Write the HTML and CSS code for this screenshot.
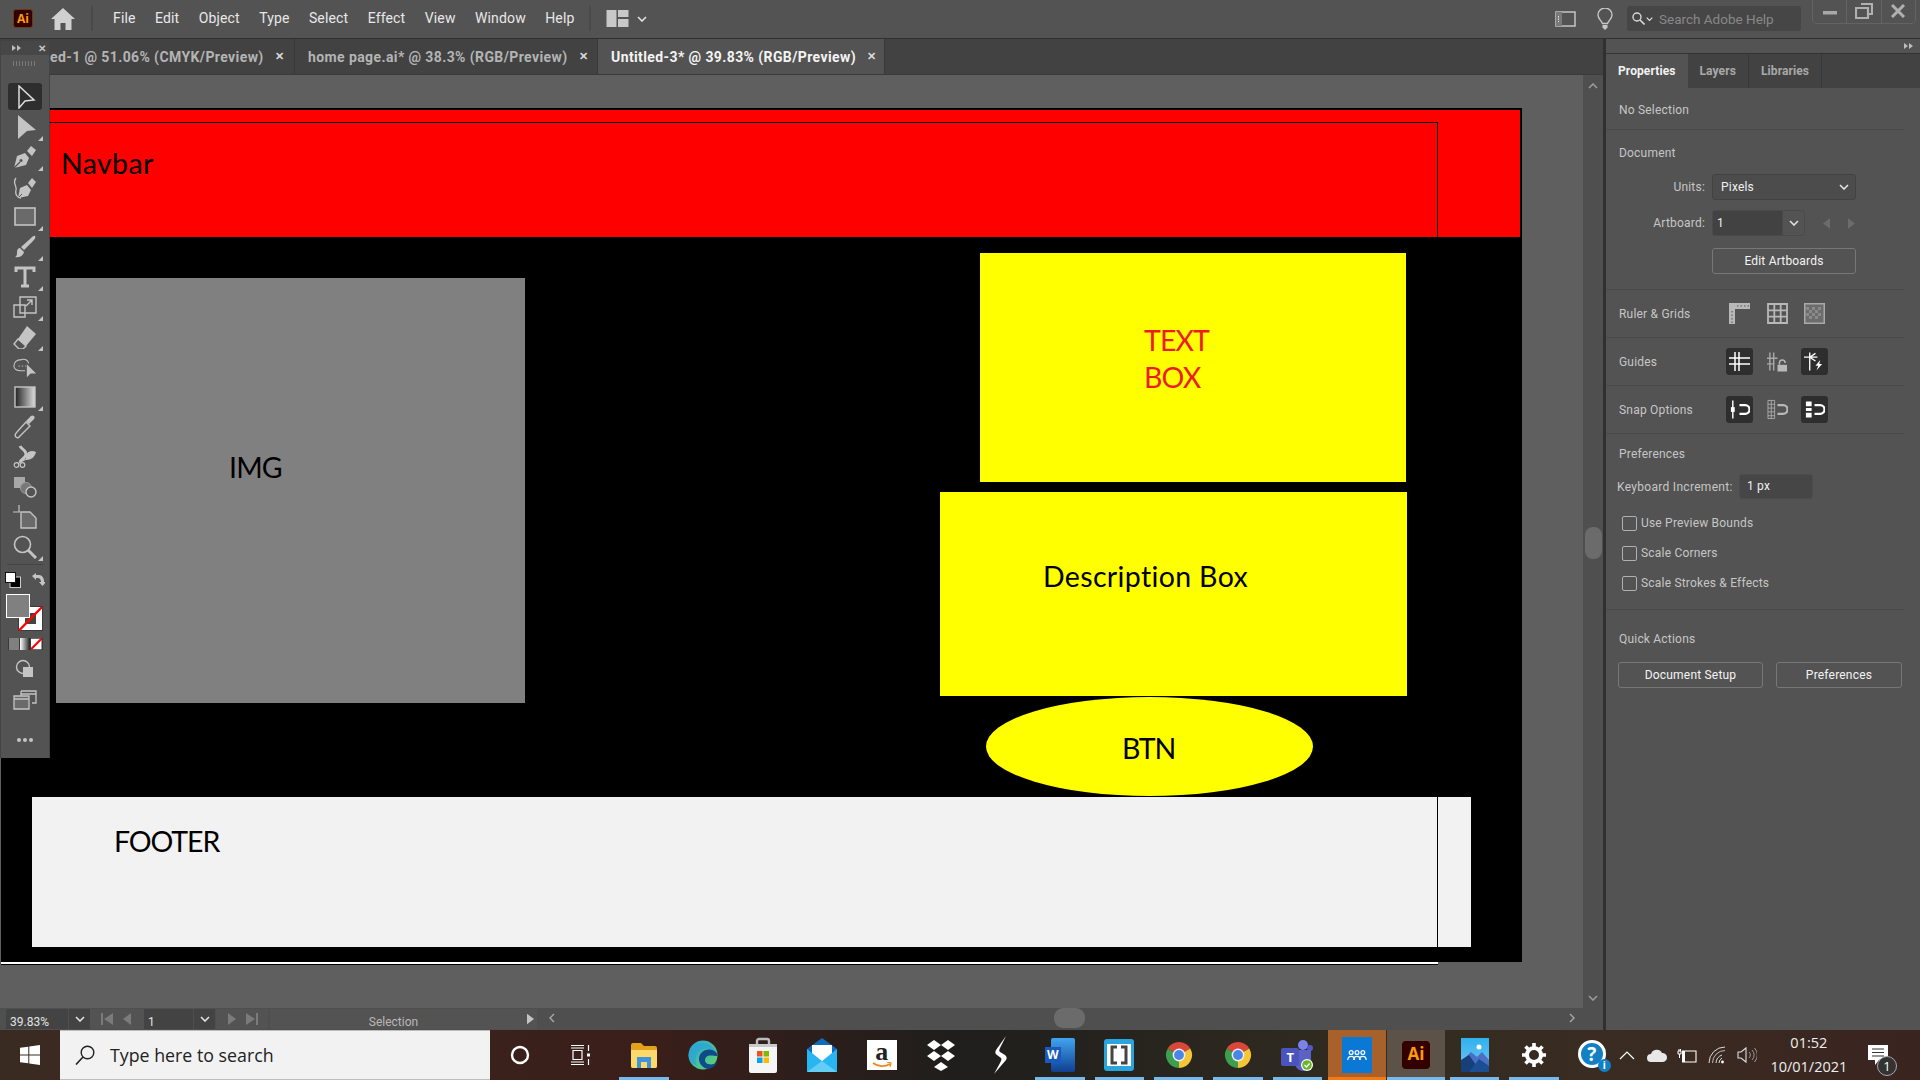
FILE: index.html
```html
<!DOCTYPE html>
<html lang="en">
<head>
  <meta charset="UTF-8">
  <title>Adobe Illustrator</title>
  <link rel="stylesheet" href="styles.css">
</head>
<body>

<svg class="defs" width="0" height="0">
  <defs>
    <linearGradient id="gradTool" x1="0" x2="1" y1="0" y2="0"><stop offset="0" stop-color="#222"/><stop offset="1" stop-color="#ddd"/></linearGradient>
    <linearGradient id="edgeGrad" x1="0" x2="1" y1="0" y2="1"><stop offset="0" stop-color="#2aa4d8"/><stop offset="1" stop-color="#62d66a"/></linearGradient>
    <linearGradient id="photoGrad" x1="0" x2="0" y1="0" y2="1"><stop offset="0" stop-color="#2db2ee"/><stop offset="1" stop-color="#7cc6f2"/></linearGradient>
    <symbol id="chev" viewBox="0 0 10 6"><path d="M1 1l4 4 4-4" fill="none" stroke="currentColor" stroke-width="1.6"/></symbol>
    <symbol id="dbl" viewBox="0 0 9 6"><path d="M0 0l4 3-4 3zM5 0l4 3-4 3z" fill="currentColor"/></symbol>
    <symbol id="chrome" viewBox="0 0 28 28">
      <path d="M14 14L2.74 7.5A13 13 0 0 1 25.26 7.5Z" fill="#d9473b"/>
      <path d="M14 14L25.26 7.5A13 13 0 0 1 14 27Z" fill="#f4c534"/>
      <path d="M14 14L14 27A13 13 0 0 1 2.74 7.5Z" fill="#3d9e4d"/>
      <circle cx="14" cy="14" r="6.4" fill="#eee"/><circle cx="14" cy="14" r="4.9" fill="#4a86e8"/>
    </symbol>
    <symbol id="nib" viewBox="0 0 24 24">
      <path d="M1 23l3-12 8-3 4 5-3 7zM14 6l4-5 5 4-4 6z" fill="currentColor"/>
      <path d="M1 23l6-6" stroke="#535353" stroke-width="1.2"/><circle cx="8" cy="15.500" r="1.500" fill="#535353"/>
    </symbol>
  </defs>
</svg>

<div class="app">

  <header class="menubar">
    <div class="ai-logo">Ai</div>
    <svg class="home" viewBox="0 0 24 22"><path d="M12 0L0 11h3.500v11h6v-7h5v7h6V11H24z" fill="#d0d0d0"/></svg>
    <span class="vsep"></span>
    <nav class="menu">
      <span>File</span><span>Edit</span><span>Object</span><span>Type</span><span>Select</span><span>Effect</span><span>View</span><span>Window</span><span>Help</span>
    </nav>
    <span class="vsep sep2"></span>
    <svg class="workspace" viewBox="0 0 22 17"><path d="M0 0h10v17H0zM11.500 0H22v7H11.500zM11.500 9H22v8H11.500z" fill="#c8c8c8"/></svg>
    <svg class="chev-sm ws-chev"><use href="#chev"/></svg>
    <div class="spacer"></div>
    <svg class="panel-ico" viewBox="0 0 21 16"><rect x="1" y="1" width="19" height="14" fill="none" stroke="#bdbdbd" stroke-width="1.600"/><path d="M1 1h6v14H1z" fill="#7a7a7a"/><path d="M3.500 5v6" stroke="#ddd" stroke-dasharray="1.500 1"/></svg>
    <svg class="bulb" viewBox="0 0 16 22"><path d="M5.500 15.500C4.500 12.500 1 11 1 7a7 7 0 0 1 14 0c0 4-3.500 5.500-4.500 8.500z" fill="none" stroke="#c6c6c6" stroke-width="1.400"/><path d="M5.500 17h5v2.500L8 22l-2.500-2.500z" fill="#c6c6c6"/></svg>
    <div class="help-search">
      <svg class="mag" viewBox="0 0 13 13"><circle cx="5" cy="5" r="4" fill="none" stroke="#d8d8d8" stroke-width="1.400"/><path d="M8 8l4.500 4.500" stroke="#d8d8d8" stroke-width="1.600"/></svg>
      <svg class="chev-sm"><use href="#chev"/></svg>
      <span>Search Adobe Help</span>
    </div>
    <div class="winctl">
      <span><svg viewBox="0 0 14 14"><rect x="0" y="7" width="14" height="3.500" fill="#a8a8a8"/></svg></span>
      <span><svg class="restore" viewBox="0 0 18 16"><path d="M6 1h11v10h-3M1 5h12v10H1z" fill="none" stroke="#b0b0b0" stroke-width="2.200"/></svg></span>
      <span><svg viewBox="0 0 14 14"><path d="M1 1l12 12M13 1L1 13" stroke="#b0b0b0" stroke-width="3"/></svg></span>
    </div>
  </header>

  <div class="work">
    <section class="doc">
      <div class="tabs">
        <div class="tab tab-first">ed-1 @ 51.06% (CMYK/Preview)<i>&#10005;</i></div>
        <div class="tab tab-second">home page.ai* @ 38.3% (RGB/Preview)<i>&#10005;</i></div>
        <div class="tab tab-on">Untitled-3* @ 39.83% (RGB/Preview)<i>&#10005;</i></div>
      </div>

      <div class="canvas-row">
        <div class="canvas">
          <div class="artboard">
            <div class="shape navbar">Navbar</div>
            <div class="outline-top"></div>
            <div class="shape img-box">IMG</div>
            <div class="shape text-box">TEXT<br>BOX</div>
            <div class="shape desc-box">Description Box</div>
            <div class="shape btn-oval">BTN</div>
            <div class="shape footer-box">FOOTER</div>
            <div class="outline-right"></div>
          </div>
          <div class="outline-bottom"></div>
        </div>
        <div class="vscroll">
          <svg class="chev-up"><use href="#chev"/></svg>
          <div class="vthumb"></div>
          <svg class="chev-down"><use href="#chev"/></svg>
        </div>
      </div>

      <div class="status">
        <div class="st-field st-zoom">39.83%</div>
        <div class="st-drop"><svg class="chev-sm"><use href="#chev"/></svg></div>
        <div class="st-nav st-nav-l">
          <svg viewBox="0 0 12 12"><path d="M0 0h2v12H0zM12 0v12L3 6z" fill="#7b7b7b"/></svg>
          <svg viewBox="0 0 12 12"><path d="M10 0v12L2 6z" fill="#7b7b7b"/></svg>
        </div>
        <div class="st-field st-page">1</div>
        <div class="st-drop"><svg class="chev-sm"><use href="#chev"/></svg></div>
        <div class="st-nav st-nav-r">
          <svg viewBox="0 0 12 12"><path d="M2 0v12l8-6z" fill="#7b7b7b"/></svg>
          <svg viewBox="0 0 12 12"><path d="M12 0h-2v12h2zM0 0v12l9-6z" fill="#7b7b7b"/></svg>
        </div>
        <div class="st-label">Selection</div>
        <div class="st-arrow"><svg viewBox="0 0 8 12"><path d="M0 0v12l8-6z" fill="#c4c4c4"/></svg></div>
        <div class="hscroll">
          <svg class="h-left" viewBox="0 0 6 10"><path d="M5 1L1 5l4 4" fill="none" stroke="#a8a8a8" stroke-width="1.400"/></svg>
          <div class="hthumb"></div>
          <svg class="h-right" viewBox="0 0 6 10"><path d="M1 1l4 4-4 4" fill="none" stroke="#a8a8a8" stroke-width="1.400"/></svg>
        </div>
      </div>
    </section>

    <aside class="panel">
      <div class="panel-strip"><svg class="dbl"><use href="#dbl"/></svg></div>
      <div class="panel-tabs">
        <div class="ptab ptab-on">Properties</div>
        <div class="ptab">Layers</div>
        <div class="ptab">Libraries</div>
      </div>

      <div class="sec sec-none">No Selection</div>

      <div class="sec sec-doc">
        <div class="sec-title">Document</div>
        <div class="form-row first">
          <label>Units:</label>
          <div class="select">Pixels<svg class="chev-sm"><use href="#chev"/></svg></div>
        </div>
        <div class="form-row row-ab">
          <label>Artboard:</label>
          <div class="combo"><span>1</span><b><svg class="chev-sm"><use href="#chev"/></svg></b></div>
          <svg class="ab-arrow" viewBox="0 0 8 12"><path d="M8 0v12L0 6z" fill="#6c6c6c"/></svg>
          <svg class="ab-arrow" viewBox="0 0 8 12"><path d="M0 0v12l8-6z" fill="#6c6c6c"/></svg>
        </div>
        <div class="form-row row-edit">
          <label></label>
          <div class="btn btn-edit">Edit Artboards</div>
        </div>
      </div>

      <div class="sec sec-icons">
        <div class="icons-label">Ruler &amp; Grids</div>
        <div class="icon-btn"><svg viewBox="0 0 21 21"><path d="M0 0h21v6H6v15H0z" fill="#b8b8b8"/><path d="M8 3h12M3 8v12" stroke="#535353" stroke-dasharray="1.500 2"/></svg></div>
        <div class="icon-btn"><svg viewBox="0 0 21 21"><path d="M1 1h19v19H1zM7.300 1v19M13.700 1v19M1 7.300h19M1 13.700h19" fill="none" stroke="#b8b8b8" stroke-width="1.800"/></svg></div>
        <div class="icon-btn"><svg viewBox="0 0 21 21"><rect width="21" height="21" fill="#a8a8a8"/><rect x="1.500" y="1.500" width="18" height="18" fill="#6c6c6c"/><path d="M2 4h3v3H2zM8 4h3v3H8zM14 4h3v3h-3zM5 7h3v3H5zM11 7h3v3h-3zM2 10h3v3H2zM8 10h3v3H8zM14 10h3v3h-3zM5 13h3v3H5zM11 13h3v3h-3z" fill="#8a8a8a"/></svg></div>
      </div>

      <div class="sec sec-icons">
        <div class="icons-label">Guides</div>
        <div class="icon-btn on"><svg viewBox="0 0 21 21"><path d="M6 1v19M10 1v19M0 7h21M0 13h21" stroke="#fff" stroke-width="1.500"/></svg></div>
        <div class="icon-btn"><svg viewBox="0 0 22 21"><path d="M3 1v19M7 1v19M0 7h11M0 13h8" stroke="#a8a8a8" stroke-width="1.500"/><path d="M11 14h10v7H11z" fill="#b8b8b8"/><path d="M13 14v-2a3 3 0 0 1 6 0" fill="none" stroke="#b8b8b8" stroke-width="1.500"/></svg></div>
        <div class="icon-btn on"><svg viewBox="0 0 22 21"><path d="M6 1v19M0 6h14M6 6l6-4M6 6l6 4" stroke="#fff" stroke-width="1.400" fill="none"/><path d="M17 9l-5 6h3l-2 5 6-7h-3z" fill="#fff"/></svg></div>
      </div>

      <div class="sec sec-icons">
        <div class="icons-label">Snap Options</div>
        <div class="icon-btn on"><svg viewBox="0 0 22 21"><path d="M4 1v19" stroke="#fff" stroke-width="1.500"/><rect x="2" y="8" width="4" height="5" fill="#fff"/><path d="M11 6h6a4 4 0 0 1 0 9h-6" fill="none" stroke="#fff" stroke-width="2.400"/></svg></div>
        <div class="icon-btn"><svg viewBox="0 0 22 21"><path d="M1 1h7v19H1zM1 5h7M1 9h7M1 13h7M1 17h7M4.500 1v19" fill="none" stroke="#a8a8a8"/><path d="M11 6h6a4 4 0 0 1 0 9h-6" fill="none" stroke="#b8b8b8" stroke-width="2.400"/></svg></div>
        <div class="icon-btn on"><svg viewBox="0 0 22 21"><path d="M2 2h6v5H2zM2 9h6v3H2zM2 14h6v5H2z" fill="#fff"/><path d="M11 6h6a4 4 0 0 1 0 9h-6" fill="none" stroke="#fff" stroke-width="2.400"/></svg></div>
      </div>

      <div class="sec sec-prefs">
        <div class="sec-title">Preferences</div>
        <div class="kbd-row">
          <label>Keyboard Increment:</label>
          <div class="kbd-input">1 px</div>
        </div>
        <div class="check"><span></span>Use Preview Bounds</div>
        <div class="check"><span></span>Scale Corners</div>
        <div class="check"><span></span>Scale Strokes &amp; Effects</div>
      </div>

      <div class="sec sec-quick">
        <div class="sec-title">Quick Actions</div>
        <div class="quick-row">
          <div class="btn btn-setup">Document Setup</div>
          <div class="btn btn-prefs">Preferences</div>
        </div>
      </div>
    </aside>
  </div>

  <footer class="taskbar">
    <div class="start">
      <svg viewBox="0 0 20 20"><path d="M0 2.800L8.300 1.700v7.800H0zM9.300 1.500L20 0v9.500H9.300zM0 10.500h8.300v7.800L0 17.200zM9.300 10.500H20V20L9.300 18.500z" fill="#fff"/></svg>
    </div>
    <div class="searchbox">
      <svg viewBox="0 0 20 20"><circle cx="12.500" cy="7.500" r="6.300" fill="none" stroke="#222" stroke-width="1.400"/><path d="M8 12L1 19.500" stroke="#222" stroke-width="1.600"/></svg>
      <span>Type here to search</span>
    </div>
    <div class="tb-slot tb-cortana"><svg viewBox="0 0 20 20" width="20" height="20"><circle cx="10" cy="10" r="8" fill="none" stroke="#fff" stroke-width="2.400"/></svg></div>
    <div class="tb-slot"><svg viewBox="0 0 20 20" width="20" height="20"><path d="M1 .5h13M1 19.500h13M3 5.500h9v9H3zM1 3h13M1 17h13M18.500 0v6M18.500 14v6" fill="none" stroke="#fff" stroke-width="1.200"/><rect x="17" y="8.500" width="3" height="3" fill="#fff"/></svg></div>

    <div class="tb-slot first-app run"><svg viewBox="0 0 28 26" width="28" height="26"><path d="M1 3a2 2 0 0 1 2-2h8l3 3h11a2 2 0 0 1 2 2v18a2 2 0 0 1-2 2H3a2 2 0 0 1-2-2z" fill="#e3a21a"/><path d="M1 8h26v16a2 2 0 0 1-2 2H3a2 2 0 0 1-2-2z" fill="#fbd96a"/><path d="M7 15h14v11h-4v-6h-6v6H7z" fill="#3f93d8"/></svg></div>
    <div class="tb-slot"><svg viewBox="0 0 30 32" width="30" height="32"><circle cx="15" cy="16" r="14.500" fill="url(#edgeGrad)"/><path d="M29.500 17c0-4-4-6.500-8.500-6.500-6 0-10 4.500-10 9.500 0 4.500 3.500 9 9 10 5-1 8-4 9-7-3 2.500-6 3-9 2-3-1-3.500-4-2.500-6 1-2 3-2.500 5-2.500 2.500 0 5 .5 7 .5z" fill="#0f4a8a"/><path d="M.5 16C2 8 8 4 14 4c7 0 12 4 14 9-3-2-7-4-12-3C9 11 5 19 9 27 3 24 .5 20 .5 16z" fill="#2aa4d8" opacity=".7"/></svg></div>
    <div class="tb-slot"><svg viewBox="0 0 30 36" width="30" height="36"><path d="M9 8V4a2 2 0 0 1 2-2h8a2 2 0 0 1 2 2v4" fill="none" stroke="#bbb" stroke-width="2.400"/><path d="M1 7h28v27a2 2 0 0 1-2 2H3a2 2 0 0 1-2-2z" fill="#f5f5f5"/><path d="M1 7h28v3H1z" fill="#c9c9c9"/><path d="M9 14h5.500v5.500H9z" fill="#f25022"/><path d="M15.500 14H21v5.500h-5.500z" fill="#7fba00"/><path d="M9 20.500h5.500V26H9z" fill="#00a4ef"/><path d="M15.500 20.500H21V26h-5.500z" fill="#ffb900"/></svg></div>
    <div class="tb-slot"><svg viewBox="0 0 30 34" width="30" height="34"><path d="M15 0l15 11v23H0V11z" fill="#0f6cbd"/><path d="M5 7h20v14l-10 4-10-4z" fill="#fff"/><path d="M0 11l15 12 15-12v23H0z" fill="#29b6f0"/><path d="M0 34l15-11 15 11z" fill="#63cdf6"/></svg></div>
    <div class="tb-slot"><div class="amazon">a<svg viewBox="0 0 20 7"><path d="M1 1c5 4 12 4 17 1" fill="none" stroke="#f08a1d" stroke-width="1.800"/><path d="M15 0l4 1-1 4" fill="none" stroke="#f08a1d" stroke-width="1.200"/></svg></div></div>
    <div class="tb-slot"><svg viewBox="0 0 30 32" width="30" height="32"><path d="M8 1l7 5-7 5-7-5zM22 1l7 5-7 5-7-5zM8 12l7 5-7 5-7-5zM22 12l7 5-7 5-7-5zM15 23l7 5-7 4-7-4z" fill="#fff"/></svg></div>
    <div class="tb-slot"><svg viewBox="0 0 14 38" width="14" height="38"><path d="M13 0L3 14c-1 2-1 4 1 5l4 3c1 1 0 3-1 5L1 38l12-14c1-2 1-3-1-5l-5-3c-1-1-1-2 0-4z" fill="#fff"/></svg></div>
    <div class="tb-slot run"><div class="word"><div class="word-doc"></div><div class="word-w">W</div></div></div>
    <div class="tb-slot run"><svg viewBox="0 0 30 32" width="30" height="32"><rect width="30" height="32" rx="3" fill="#2aa4dd"/><rect x="3" y="5" width="24" height="22" fill="#fff"/><path d="M13 8H8v16h5M17 8h5v16h-5" fill="none" stroke="#444" stroke-width="3"/></svg></div>
    <div class="tb-slot run"><svg width="28" height="28"><use href="#chrome"/></svg></div>
    <div class="tb-slot run"><svg width="28" height="28"><use href="#chrome"/></svg></div>
    <div class="tb-slot run"><div class="teams"><svg viewBox="0 0 32 34" width="32" height="34"><circle cx="22" cy="7" r="5" fill="#7b83eb"/><circle cx="29" cy="10" r="3" fill="#5059c9"/><path d="M10 12h20v12a8 8 0 0 1-16 2H10z" fill="#5b62c4"/><rect x="0" y="10" width="18" height="18" rx="2" fill="#4b53bc"/><circle cx="26" cy="27" r="6" fill="#fff"/><circle cx="26" cy="27" r="4.800" fill="#6bb52b"/><path d="M23.500 27l2 2 3-3.500" fill="none" stroke="#fff" stroke-width="1.300"/></svg><span>T</span></div></div>
    <div class="tb-slot tile-active"><div class="ppa"><svg viewBox="0 0 24 14" width="20" height="12"><g fill="none" stroke="#fff" stroke-width="1.500"><circle cx="5" cy="4" r="2.300"/><circle cx="12" cy="4" r="2.300"/><circle cx="19" cy="4" r="2.300"/><path d="M1 13c0-6 8-6 8 0M8 13c0-6 8-6 8 0M15 13c0-6 8-6 8 0"/></g></svg></div></div>
    <div class="tb-slot tile-open"><div class="ai-logo ai-big">Ai</div></div>
    <div class="tb-slot run"><svg viewBox="0 0 28 34" width="28" height="34"><rect width="28" height="34" fill="url(#photoGrad)"/><circle cx="18" cy="9" r="2.500" fill="#fff"/><path d="M0 24l10-10 6 5 5-5 7 8v12H0z" fill="#4a6fc4"/><path d="M0 34V22l8-5 12 17z" fill="#173f7a"/><path d="M8 34l10-13 10 7v6z" fill="#1b4f94"/></svg></div>
    <div class="tb-slot run"><svg viewBox="0 0 24 24" width="24" height="24"><circle cx="12" cy="12" r="7" fill="none" stroke="#fff" stroke-width="4"/><path d="M12 0v5M12 19v5M0 12h5M19 12h5M3.500 3.500L7 7M17 17l3.500 3.500M20.500 3.500L17 7M7 17l-3.500 3.500" stroke="#fff" stroke-width="3.600"/></svg></div>

    <div class="tray">
      <div class="tray-help">
        <div class="help-ring">?</div>
        <div class="help-i">i</div>
      </div>
      <div class="tray-ico t-up"><svg viewBox="0 0 16 9" width="16" height="9"><path d="M1 8l7-7 7 7" fill="none" stroke="#fff" stroke-width="1.200"/></svg></div>
      <div class="tray-ico t-cloud"><svg viewBox="0 0 20 13" width="20" height="13"><path d="M4 13a4 4 0 0 1 0-8 6 6 0 0 1 11-1 4.500 4.500 0 0 1 1 9z" fill="#e8e8e8"/></svg></div>
      <div class="tray-ico t-batt"><svg viewBox="0 0 20 15" width="20" height="15"><path d="M5 3h14v11H5" fill="none" stroke="#fff" stroke-width="1.100"/><path d="M5 3h3v11H5z" fill="#fff"/><path d="M1 3h3v3H1zM2 1v2M3.500 1v2M2.500 6v4" stroke="#fff" stroke-width="1" fill="none"/></svg></div>
      <div class="tray-ico t-wifi"><svg viewBox="0 0 18 18" width="18" height="18"><g fill="none" stroke="#ddd" stroke-width="1"><path d="M1 17A16 16 0 0 1 17 1"/><path d="M4.500 17A12.500 12.500 0 0 1 17 4.500" opacity=".8"/><path d="M8 17a9 9 0 0 1 6-8"/><path d="M11 17a6 6 0 0 1 3-5"/></g><circle cx="14.500" cy="16" r="1.400" fill="#fff"/></svg></div>
      <div class="tray-ico t-vol"><svg viewBox="0 0 20 18" width="20" height="18"><path d="M1 6h3l5-4v14l-5-4H1z" fill="none" stroke="#ddd" stroke-width="1.100"/><path d="M12 6a4 4 0 0 1 0 6M15 4a7 7 0 0 1 0 10M17.500 2a10 10 0 0 1 0 14" fill="none" stroke="#999"/></svg></div>
      <div class="clock"><div>01:52</div><div>10/01/2021</div></div>
      <div class="notif">
        <svg viewBox="0 0 20 20" width="20" height="20"><path d="M0 0h20v15h-9l-4 5v-5H0z" fill="#fff"/><path d="M4 4h12M4 7.500h12M4 11h12" stroke="#333" stroke-width="1.100"/></svg>
        <div class="notif-count">1</div>
      </div>
    </div>
  </footer>

  <div class="toolbar">
    <div class="tb-head"><svg class="dbl"><use href="#dbl"/></svg><b>&#10005;</b></div>
    <div class="tb-grip"></div>
    <div class="tool tool-on"><svg viewBox="0 0 24 24"><path d="M6 1v22l6-7 9-1z" fill="none" stroke="#ddd" stroke-width="1.500"/></svg></div>
    <div class="tool more"><svg viewBox="0 0 24 24"><path d="M5 0l18 15-9 1-9 8z" fill="currentColor"/></svg></div>
    <div class="tool more"><svg viewBox="0 0 24 24"><use href="#nib"/></svg></div>
    <div class="tool"><svg viewBox="0 0 24 24"><path d="M5 23l2-10 7-3 4 5-3 6zM15 8l4-5 4 4-4 6z" fill="currentColor"/><path d="M5 23l4-4" stroke="#535353"/><path d="M3 3C-1 8 4 10 3 15c-1 4 1 8 5 8" fill="none" stroke="currentColor" stroke-width="1.300"/></svg></div>
    <div class="tool more"><svg viewBox="0 0 24 24"><rect x="2" y="3" width="20" height="17" fill="#6a6a6a" stroke="currentColor" stroke-width="1.600"/></svg></div>
    <div class="tool more"><svg viewBox="0 0 24 24"><path d="M22 1c1 1 0 3-2 5L11 15l-3-3 9-8c2-2 4-4 5-3z" fill="currentColor"/><path d="M7 13l4 4c-1 4-5 6-9 5 2-1 2-3 2-5 0-2 1-4 3-4z" fill="currentColor"/></svg></div>
    <div class="tool more"><svg viewBox="0 0 24 24"><path d="M3 7V3h18v4M12 3v18M8 21h8" fill="none" stroke="currentColor" stroke-width="3"/></svg></div>
    <div class="tool more"><svg viewBox="0 0 24 24"><path d="M7 2h16v16H7zM1 10h11v12H1zM13 11l6-6M14 5h5v5" fill="none" stroke="currentColor" stroke-width="1.400"/></svg></div>
    <div class="tool more"><svg viewBox="0 0 24 24"><path d="M14 1l9 8-10 12-8-7z" fill="currentColor"/><path d="M5 14l8 7-3 3H6l-5-5z" fill="none" stroke="currentColor" stroke-width="1.400"/></svg></div>
    <div class="tool"><svg viewBox="0 0 26 24"><path d="M17 8c-1-3-4-5-8-4-5 0-8 3-8 7 0 3 3 5 7 5h5" fill="none" stroke="currentColor" stroke-width="1.200"/><path d="M6 11h1.500M9.500 11H11M13 11h1" stroke="currentColor"/><path d="M15 9v14l4-4 6 0z" fill="currentColor"/></svg></div>
    <div class="tool more"><svg viewBox="0 0 24 24"><rect x="2" y="2" width="20" height="20" fill="url(#gradTool)" stroke="#c4c4c4" stroke-width="1.400"/></svg></div>
    <div class="tool"><svg viewBox="0 0 24 24"><path d="M3 22c-2-2 0-4 1-5l9-10 4 4-10 10c-1 1-2 3-4 1z" fill="none" stroke="currentColor" stroke-width="1.400"/><path d="M13 6l3-3c2-3 4-3 5-2s1 3-2 5l-3 3z" fill="currentColor"/></svg></div>
    <div class="tool"><svg viewBox="0 0 24 24"><path d="M7 1c1 3 6 4 6 8s-5 5-6 8" fill="none" stroke="currentColor" stroke-width="2.800"/><path d="M13 10c2-4 6-5 10-3-1 5-5 8-10 8" fill="currentColor"/><circle cx="3.500" cy="20" r="2.300" fill="none" stroke="currentColor" stroke-width="1.200"/><circle cx="9.500" cy="20" r="2.300" fill="none" stroke="currentColor" stroke-width="1.200"/><path d="M5 18.500L13 14" stroke="currentColor" stroke-width="1.200"/></svg></div>
    <div class="tool"><svg viewBox="0 0 24 24"><path d="M1 2h11v11H1z" fill="#a8a8a8"/><circle cx="13" cy="13" r="5.500" fill="#777" stroke="#999"/><circle cx="18" cy="17" r="5" fill="#535353" stroke="#c4c4c4" stroke-width="1.400"/></svg></div>
    <div class="tool"><svg viewBox="0 0 24 24"><path d="M8 7h9l6 6v10H8z" fill="#6a6a6a" stroke="currentColor" stroke-width="1.400"/><path d="M0 7h7M6 0v7" stroke="currentColor" stroke-width="1.200"/></svg></div>
    <div class="tool more"><svg viewBox="0 0 24 24"><circle cx="9.500" cy="9.500" r="8" fill="none" stroke="currentColor" stroke-width="1.600"/><path d="M15 15l8 8" stroke="currentColor" stroke-width="3"/></svg></div>
    <div class="tb-rule"></div>
    <div class="tb-swap">
      <svg class="def-colors" viewBox="0 0 16 16"><rect x="5" y="5" width="10.500" height="10.500" fill="#000" stroke="#ccc"/><rect x=".5" y=".5" width="10" height="10" fill="#fff" stroke="#111"/></svg>
      <svg class="swap-arrow" viewBox="0 0 14 14"><path d="M1 4l4-3v2h3c3 0 5 3 5 6v1h2l-3.500 4L8 10h2c0-2-1-4-3-4H5v2z" fill="#c4c4c4"/></svg>
    </div>
    <svg class="fillstroke" viewBox="0 0 37 37">
      <rect x="12.500" y="12.500" width="24" height="24" fill="#fff" stroke="#3a3a3a"/>
      <rect x="19" y="19" width="11" height="11" fill="#444"/>
      <path d="M13 36.500L36 13" stroke="#f00" stroke-width="2.400"/>
      <rect x=".5" y=".5" width="23" height="23" fill="#808080" stroke="#fff" stroke-width="1"/>
    </svg>
    <div class="colormodes">
      <span class="cm cm-grey"></span><span class="cm cm-grad"></span>
      <svg class="cm" viewBox="0 0 10 10"><rect width="10" height="10" fill="#fff"/><path d="M0 10L10 0" stroke="#f00" stroke-width="2"/></svg>
    </div>
    <div class="tool tool-low"><svg viewBox="0 0 20 20"><circle cx="8" cy="8" r="6.500" fill="none" stroke="currentColor" stroke-width="1.400"/><rect x="8" y="8" width="10" height="10" fill="currentColor"/></svg></div>
    <div class="tool tool-screen"><svg viewBox="0 0 24 20"><path d="M8 1h15v12h-4M8 1v5M8 4h15" fill="none" stroke="currentColor" stroke-width="1.300"/><path d="M1 6h15v13H1zM1 9h15" fill="#6a6a6a" stroke="currentColor" stroke-width="1.300"/></svg></div>
    <div class="tb-dots"><span></span><span></span><span></span></div>
  </div>

</div>

</body>
</html>
```

FILE: styles.css
```css
* {
  box-sizing: border-box;
}
html, body {
  margin: 0;
  padding: 0;
}
body {
  width: 1920px;
  height: 1080px;
  overflow: hidden;
  font-family: Roboto, "Liberation Sans", sans-serif;
  font-size: 12px;
  color: #cfcfcf;
  background: #535353;
}
svg {
  display: block;
  flex: none;
}
.defs {
  position: absolute;
}
.app {
  position: relative;
  width: 1920px;
  height: 1080px;
  display: flex;
  flex-direction: column;
}
.spacer {
  flex: 1;
}
.chev-sm {
  width: 10px;
  height: 6px;
  color: #e2e2e2;
}
.dbl {
  width: 9px;
  height: 6px;
  color: #bdbdbd;
}

/* top menu */
.menubar {
  height: 39px;
  flex: none;
  display: flex;
  align-items: center;
  background: #535353;
  border-bottom: 1px solid #2f2f2f;
  padding: 0 0 1px 13px;
}
.ai-logo {
  width: 20px;
  height: 19px;
  background: #330000;
  border: 1px solid #6b3a1a;
  border-radius: 3px;
  color: #ff9a00;
  font: bold 12px/17px "Open Sans", sans-serif;
  text-align: center;
}
.home {
  width: 24px;
  height: 22px;
  margin-left: 18px;
}
.vsep {
  width: 2px;
  height: 25px;
  background: #4a4a4a;
  margin-left: 16px;
}
.menu {
  display: flex;
  gap: 19.400px;
  margin: 0 0 2px 20px;
  font-size: 14px;
  letter-spacing: .15px;
  color: #e8e8e8;
}
.sep2 {
  margin-left: 14px;
}
.workspace {
  width: 23px;
  height: 17px;
  margin-left: 15px;
}
.ws-chev {
  margin-left: 8px;
}
.panel-ico {
  width: 21px;
  height: 16px;
  margin-right: 21px;
}
.bulb {
  width: 16px;
  height: 22px;
  margin-right: 14px;
}
.help-search {
  width: 174px;
  height: 25px;
  background: #464646;
  border-radius: 3px;
  display: flex;
  align-items: center;
  padding-left: 5px;
  font-size: 13.500px;
  color: #888;
}
.mag {
  width: 13px;
  height: 13px;
}
.help-search .chev-sm {
  width: 7px;
  margin: 0 6px 0 1px;
}
.winctl {
  width: 104px;
  height: 24px;
  margin: 0 4px 14px 11px;
  display: flex;
  border: 1px solid #636363;
  border-top: 0;
  border-radius: 0 0 5px 5px;
}
.winctl span {
  flex: 1;
  display: flex;
  align-items: center;
  justify-content: center;
  border-left: 1px solid #636363;
}
.winctl span:first-child {
  border-left: 0;
}
.winctl svg {
  width: 14px;
  height: 14px;
}
.winctl svg.restore {
  width: 18px;
  height: 16px;
}

/* main area */
.work {
  flex: 1;
  min-height: 0;
  display: flex;
}
.doc {
  width: 1606px;
  flex: none;
  display: flex;
  flex-direction: column;
  border-right: 3px solid #303030;
}

/* document tabs */
.tabs {
  height: 36px;
  flex: none;
  display: flex;
  background: #424242;
  border-bottom: 1px solid #3a3a3a;
  font-size: 14px;
  letter-spacing: .4px;
  font-weight: 700;
  color: #b4b4b4;
}
.tab {
  display: flex;
  align-items: center;
  white-space: nowrap;
  border-right: 1px solid #383838;
}
.tab i {
  font-style: normal;
  font-size: 11px;
  font-weight: 700;
  margin-left: 11px;
  color: #d8d8d8;
}
.tab-first {
  width: 295px;
  padding-left: 50px;
}
.tab-second {
  width: 303px;
  padding-left: 13px;
}
.tab-on {
  width: 287px;
  padding-left: 13px;
  background: #535353;
  color: #f4f4f4;
}

/* canvas */
.canvas-row {
  flex: 1;
  min-height: 0;
  display: flex;
}
.canvas {
  flex: 1;
  position: relative;
  background: #5f5f5f;
  overflow: hidden;
}
.canvas::after {
  content: "";
  position: absolute;
  left: 0;
  top: 0;
  bottom: 0;
  width: 1px;
  background: #5f5f5f;
}
.artboard {
  position: absolute;
  left: 0;
  top: 33px;
  width: 1522px;
  height: 854px;
  background: #000;
}
.shape {
  position: absolute;
  font-family: Lato, "Open Sans", sans-serif;
  font-size: 28.500px;
  line-height: 37px;
  color: #000;
}
.navbar {
  left: 0;
  top: 2px;
  width: 1520px;
  height: 127px;
  background: #f00;
  padding: 35px 0 0 61px;
  letter-spacing: .4px;
}
.outline-top {
  position: absolute;
  left: 0;
  top: 14px;
  width: 1438px;
  height: 115px;
  border-top: 1px solid #000;
  border-right: 1px solid #000;
}
.img-box {
  left: 56px;
  top: 170px;
  width: 469px;
  height: 425px;
  background: #808080;
  padding: 171px 0 0 173px;
  letter-spacing: -.8px;
}
.text-box {
  left: 980px;
  top: 145px;
  width: 426px;
  height: 229px;
  background: #ff0;
  color: #ed1c24;
  padding: 69px 0 0 164px;
  letter-spacing: -.9px;
}
.desc-box {
  left: 940px;
  top: 384px;
  width: 467px;
  height: 204px;
  background: #ff0;
  padding: 66px 0 0 103px;
  letter-spacing: .35px;
}
.btn-oval {
  left: 986px;
  top: 589px;
  width: 327px;
  height: 99px;
  background: #ff0;
  border-radius: 50%;
  padding: 33px 0 0 136px;
  letter-spacing: -1.200px;
}
.footer-box {
  left: 32px;
  top: 689px;
  width: 1439px;
  height: 150px;
  background: #f2f2f2;
  padding: 26px 0 0 82px;
  letter-spacing: -1.100px;
}
.outline-right {
  position: absolute;
  left: 1437px;
  top: 689px;
  width: 1px;
  height: 165px;
  background: #000;
}
.outline-bottom {
  position: absolute;
  left: 0;
  top: 887px;
  width: 1438px;
  height: 3px;
  background: #fff;
  border-bottom: 1px solid #000;
}
.vscroll {
  width: 20px;
  flex: none;
  display: flex;
  flex-direction: column;
  align-items: center;
  background: #4f4f4f;
}
.chev-up {
  width: 10px;
  height: 6px;
  margin-top: 8px;
  color: #9a9a9a;
  transform: rotate(180deg);
}
.vthumb {
  width: 17px;
  height: 32px;
  margin-top: 438px;
  border-radius: 8px;
  background: #6b6b6b;
}
.chev-down {
  width: 10px;
  height: 6px;
  margin-top: auto;
  margin-bottom: 7px;
  color: #9a9a9a;
}

/* status bar */
.status {
  height: 22px;
  flex: none;
  display: flex;
  background: #4f4f4f;
  padding: 1px 0 1px 6px;
  font-size: 12px;
}
.st-field {
  background: #434343;
  height: 20px;
  line-height: 26px;
  padding-left: 4px;
  color: #e4e4e4;
  border-radius: 2px 2px 0 0;
}
.st-zoom {
  width: 62px;
}
.st-page {
  width: 49px;
}
.st-drop {
  width: 21px;
  margin-left: 1px;
  background: #434343;
  display: flex;
  align-items: center;
  justify-content: center;
}
.st-nav {
  width: 54px;
  display: flex;
  align-items: center;
  justify-content: center;
  gap: 8px;
  background: #535353;
}
.st-nav svg {
  width: 12px;
  height: 12px;
}
.st-nav-r {
  width: 52px;
  margin-left: 1px;
}
.st-label {
  width: 253px;
  margin-left: 2px;
  padding-right: 6px;
  text-align: center;
  line-height: 26px;
  background: #535353;
  color: #b8b8b8;
}
.st-arrow {
  width: 14px;
  display: flex;
  align-items: center;
  justify-content: center;
  background: #535353;
}
.st-arrow svg {
  width: 7px;
  height: 12px;
}
.hscroll {
  flex: 1;
  display: flex;
  align-items: center;
}
.h-left {
  width: 6px;
  height: 10px;
  margin: -3px 0 0 12px;
}
.hthumb {
  width: 31px;
  height: 20px;
  margin: -3px 0 0 499px;
  border-radius: 9px;
  background: #6b6b6b;
}
.h-right {
  width: 6px;
  height: 10px;
  margin: -3px 28px 0 auto;
}

/* properties panel */
.panel {
  flex: 1;
  background: #535353;
  display: flex;
  flex-direction: column;
}
.panel-strip {
  height: 15px;
  flex: none;
  display: flex;
  align-items: center;
  justify-content: flex-end;
  border-bottom: 1px solid #333;
  padding-right: 7px;
}
.panel-tabs {
  height: 34px;
  flex: none;
  display: flex;
  background: #424242;
  font-weight: 700;
  font-size: 12px;
  letter-spacing: .1px;
  color: #a9a9a9;
}
.ptab {
  padding: 0 12px;
  line-height: 34px;
  border-right: 1px solid #383838;
}
.ptab-on {
  background: #535353;
  color: #f2f2f2;
  border-right: 0;
}
.sec {
  margin-right: 16px;
  padding-left: 13px;
  border-bottom: 1px solid #4a4a4a;
  color: #c6c6c6;
  letter-spacing: .2px;
}
.sec-none {
  height: 42px;
  line-height: 44px;
  flex: none;
}
.sec-title {
  line-height: 16px;
}
.sec-doc {
  height: 160px;
  flex: none;
  padding: 15px 0 0 0;
}
.sec-doc .sec-title {
  padding-left: 13px;
}
.form-row {
  display: flex;
  align-items: center;
  margin-top: 11px;
}
.form-row.first {
  margin-top: 13px;
}
.form-row.row-ab {
  margin-top: 10px;
}
.form-row.row-edit {
  margin-top: 12px;
}
.form-row label {
  width: 99px;
  text-align: right;
  margin-right: 7px;
}
.select {
  width: 144px;
  height: 26px;
  display: flex;
  align-items: center;
  justify-content: space-between;
  padding: 0 6px 0 8px;
  background: #4c4c4c;
  border: 1px solid #424242;
  border-radius: 3px;
  color: #f0f0f0;
}
.combo {
  width: 93px;
  height: 26px;
  display: flex;
  border: 1px solid #4a4a4a;
  border-radius: 3px;
  color: #f0f0f0;
}
.combo span {
  flex: 1;
  background: #424242;
  padding-left: 4px;
  line-height: 24px;
}
.combo b {
  width: 22px;
  display: flex;
  align-items: center;
  justify-content: center;
  border-left: 1px solid #4a4a4a;
}
.ab-arrow {
  width: 7px;
  height: 11px;
  margin-left: 18px;
}
.btn {
  height: 26px;
  line-height: 24px;
  text-align: center;
  border: 1px solid #777;
  border-radius: 3px;
  color: #f4f4f4;
}
.btn-edit {
  width: 144px;
}
.sec-icons {
  height: 48px;
  flex: none;
  display: flex;
  align-items: center;
}
.icons-label {
  width: 107px;
}
.icon-btn {
  width: 27px;
  height: 27px;
  margin-right: 10.500px;
  display: flex;
  align-items: center;
  justify-content: center;
  border-radius: 3px;
}
.icon-btn.on {
  background: #2e2e2e;
}
.icon-btn svg {
  width: 21px;
  height: 21px;
}
.sec-prefs {
  height: 176px;
  flex: none;
  padding-top: 12px;
}
.kbd-row {
  display: flex;
  align-items: center;
  margin: 12px 0 0 -2px;
}
.kbd-row label {
  width: 122px;
  letter-spacing: .3px;
}
.kbd-input {
  width: 74px;
  height: 25px;
  line-height: 23px;
  padding-left: 7px;
  background: #464646;
  border: 1px solid #4c4c4c;
  border-radius: 3px;
  color: #f0f0f0;
}
.check {
  height: 16px;
  display: flex;
  align-items: center;
  margin-top: 14px;
  padding-left: 3px;
}
.kbd-row + .check {
  margin-top: 16px;
}
.check span {
  width: 15px;
  height: 15px;
  margin-right: 4px;
  border: 1px solid #b0b0b0;
  border-radius: 2px;
}
.sec-quick {
  flex: 1;
  border-bottom: 0;
  padding-top: 21px;
  padding-left: 13px;
}
.quick-row {
  display: flex;
  gap: 13px;
  margin: 15px 0 0 -1px;
}
.btn-setup {
  width: 145px;
}
.btn-prefs {
  width: 126px;
}

/* floating tools */
.toolbar {
  position: absolute;
  left: 0;
  top: 41px;
  width: 50px;
  height: 717px;
  display: flex;
  flex-direction: column;
  align-items: center;
  background: #535353;
  border-left: 1px solid #444;
  border-right: 1px solid #444;
  color: #c4c4c4;
}
.tb-head {
  width: 100%;
  height: 14px;
  display: flex;
  justify-content: space-between;
  align-items: center;
  padding: 0 3px 0 11px;
  background: #474747;
}
.tb-head b {
  font-size: 10px;
}
.tb-grip {
  width: 24px;
  height: 5px;
  margin: 6px 0 16px;
  flex: none;
  background: repeating-linear-gradient(90deg, #7a7a7a 0 1px, transparent 1px 3px);
}
.tool {
  width: 34px;
  height: 30px;
  flex: none;
  position: relative;
  display: flex;
  align-items: center;
  justify-content: center;
}
.tool svg {
  width: 24px;
  height: 24px;
}
.tool-on {
  background: #2e2e2e;
  border-radius: 3px;
  height: 27px;
  margin: 1px 0 2px;
}
.tool.more::after {
  content: "";
  position: absolute;
  right: -1px;
  bottom: 1px;
  border-left: 5px solid transparent;
  border-bottom: 5px solid #c4c4c4;
}
.tb-rule {
  width: 36px;
  height: 1px;
  margin-top: 2px;
  background: #444;
}
.tb-swap {
  width: 40px;
  display: flex;
  justify-content: space-between;
  margin-top: 7px;
}
.def-colors {
  width: 16px;
  height: 16px;
}
.swap-arrow {
  width: 14px;
  height: 14px;
}
.fillstroke {
  width: 37px;
  height: 37px;
  margin: 6px 0 0 -1px;
}
.colormodes {
  display: flex;
  width: 35px;
  height: 12px;
  margin-top: 7px;
  background: #3a3a3a;
  padding: 0 1px;
  gap: 1px;
}
.cm {
  width: 10.500px;
  height: 12px;
}
.cm-grey {
  background: #808080;
}
.cm-grad {
  background: linear-gradient(90deg, #fff, #222);
}
.tool-low {
  height: 24px;
  margin-top: 7px;
}
.tool-low svg {
  width: 20px;
  height: 20px;
}
.tool-screen {
  margin-top: 6px;
  height: 26px;
}
.tb-dots {
  display: flex;
  gap: 2px;
  margin-top: 25px;
}
.tb-dots span {
  width: 4px;
  height: 4px;
  border-radius: 50%;
  background: #c4c4c4;
}

/* windows taskbar */
.taskbar {
  height: 50px;
  flex: none;
  display: flex;
  background: linear-gradient(90deg, #3a2b22 0, #3a1e1a 34%, #1f1e1c 50%, #2f2a20 68%, #3a2c22 84%, #3a2420 100%);
}
.start {
  width: 60px;
  flex: none;
  display: flex;
  align-items: center;
  justify-content: center;
}
.start svg {
  width: 20px;
  height: 20px;
}
.searchbox {
  width: 430px;
  flex: none;
  display: flex;
  align-items: center;
  background: #f2f2f2;
  border-top: 1px solid #bdbdbd;
  border-bottom: 1px solid #bdbdbd;
  padding-left: 15px;
  font-family: "Open Sans", sans-serif;
  font-size: 17.800px;
  color: #222;
}
.searchbox svg {
  width: 20px;
  height: 20px;
  margin-right: 15px;
}
.tb-slot {
  width: 59.400px;
  flex: none;
  position: relative;
  display: flex;
  align-items: center;
  justify-content: center;
}
.tb-cortana {
  width: 60px;
}
.first-app {
  margin-left: 5px;
}
.run::after {
  content: "";
  position: absolute;
  left: 5px;
  right: 5px;
  bottom: 0;
  height: 3px;
  background: #76b9ed;
}
.amazon {
  width: 30px;
  height: 30px;
  background: #fff;
  color: #222;
  text-align: center;
  font: bold 26px/23px "Liberation Serif", serif;
}
.amazon svg {
  width: 20px;
  height: 7px;
  margin: -1px auto 0;
}
.word {
  width: 30px;
  height: 34px;
  position: relative;
}
.word-doc {
  position: absolute;
  right: 0;
  top: 0;
  width: 24px;
  height: 34px;
  background: linear-gradient(#41a5ee, #103f91);
  border-radius: 2px;
}
.word-w {
  position: absolute;
  left: 0;
  top: 9px;
  width: 16px;
  height: 16px;
  background: #185abd;
  color: #fff;
  font: bold 12px/16px "Open Sans", sans-serif;
  text-align: center;
}
.teams {
  position: relative;
  width: 32px;
  height: 34px;
}
.teams span {
  position: absolute;
  left: 0;
  top: 10px;
  width: 18px;
  color: #fff;
  font: bold 13px/18px "Open Sans", sans-serif;
  text-align: center;
}
.tile-active {
  width: 58px;
  margin-left: 1px;
  background: #a8612a;
  border-bottom: 3px solid #f67a10;
}
.ppa {
  width: 30px;
  height: 36px;
  background: #0a78d4;
  display: flex;
  align-items: center;
  justify-content: center;
  margin-top: 3px;
}
.tile-open {
  width: 58px;
  margin-left: 1px;
  background: #5c5247;
  border-bottom: 3px solid #76b9ed;
}
.ai-big {
  width: 28px;
  height: 28px;
  font-size: 17px;
  line-height: 25px;
  border-width: 0;
  border-radius: 4px;
  margin-top: 3px;
}
.tray {
  flex: 1;
  display: flex;
  align-items: center;
  margin-left: 1px;
  position: relative;
}
.tray-help {
  position: relative;
  width: 30px;
  height: 34px;
  margin-left: 13px;
}
.help-ring {
  width: 28px;
  height: 28px;
  margin-top: 2px;
  border-radius: 50%;
  border: 3px solid #fff;
  background: #1281c4;
  color: #fff;
  font: bold 19px/22px "Open Sans", sans-serif;
  text-align: center;
}
.help-i {
  position: absolute;
  right: -3px;
  bottom: 0;
  width: 13px;
  height: 13px;
  border-radius: 50%;
  background: #1281c4;
  color: #fff;
  font: bold 10px/13px "Open Sans", sans-serif;
  text-align: center;
}
.tray-ico {
  display: flex;
}
.t-up {
  margin-left: 11px;
}
.t-cloud {
  margin-left: 12px;
}
.t-batt {
  margin-left: 10px;
}
.t-wifi {
  margin-left: 11px;
}
.t-vol {
  margin-left: 11px;
}
.clock {
  width: 88px;
  margin-left: 8px;
  text-align: center;
  font-family: "Open Sans", sans-serif;
  font-size: 14.500px;
  line-height: 24px;
  color: #eee;
}
.notif {
  position: relative;
  margin-left: 15px;
  width: 20px;
  height: 20px;
  margin-top: 0;
}
.notif-count {
  position: absolute;
  left: 9px;
  top: 11px;
  width: 20px;
  height: 20px;
  border-radius: 50%;
  border: 1px solid #aaa;
  background: #333;
  color: #fff;
  font: 13px/18px "Open Sans", sans-serif;
  text-align: center;
}
```
